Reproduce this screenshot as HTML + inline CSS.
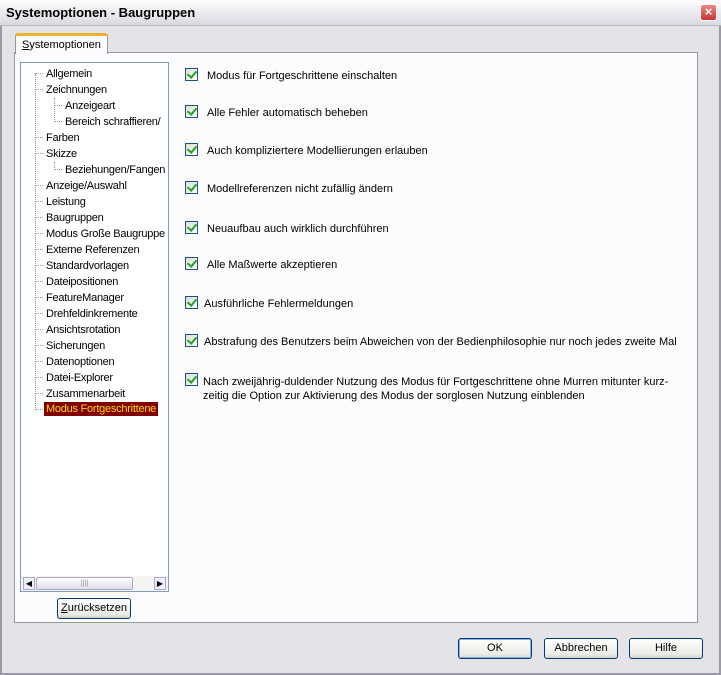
<!DOCTYPE html>
<html><head><meta charset="utf-8"><style>
*{margin:0;padding:0;box-sizing:border-box}
body{width:721px;height:675px;background:#e4e3e7;font-family:"Liberation Sans",sans-serif;font-size:11px;color:#000;position:relative;overflow:hidden}
.a{position:absolute}
.title{left:0;top:0;width:721px;height:26px;background:linear-gradient(#fdfdfd,#e8e8ee 60%,#d8d8e0);border-bottom:1px solid #b8b8c4}
.title span{position:absolute;left:6px;top:5px;font-weight:bold;font-size:13px}
.close{right:4px;top:4px;width:17px;height:17px;background:linear-gradient(#e88,#c33);border:1px solid #fff;border-radius:3px;color:#fff;font-weight:bold;font-size:13px;text-align:center;line-height:14px}
.frame{left:0;top:26px;width:721px;height:649px;border:2px solid #9a9aa6;border-top:none}
.panel{left:14px;top:52px;width:684px;height:571px;background:#fcfcfe;border:1px solid #919b9c}
.tab{left:15px;top:33px;width:93px;height:21px;background:#fcfcfe;border:1px solid #919b9c;border-bottom:none;border-top:3px solid #f0b030;border-radius:3px 3px 0 0}
.tab span{position:absolute;left:6px;top:3px;font-size:11px}
.tree{left:20px;top:62px;width:149px;height:530px;background:#fff;border:1px solid #7f9db9}
.tl{left:20px;top:62px;width:148px;height:420px;overflow:hidden}
.ti{position:absolute;white-space:nowrap;font-size:11px;height:14px;line-height:14px;letter-spacing:-0.25px}
.hl{position:absolute;border-top:1px dotted #999;width:8px}
.vl{position:absolute;border-left:1px dotted #999}
.sb{left:21px;top:576px;width:147px;height:15px;background:#f4f4f2}
.cb{position:absolute;width:13px;height:13px;border:1px solid #1c5180;background:linear-gradient(135deg,#dcdcd6,#fff)}
.cb:after{content:"";position:absolute;left:3px;top:0px;width:4px;height:7px;border:solid #21a121;border-width:0 2px 2px 0;transform:rotate(40deg)}
.lb{position:absolute;white-space:nowrap;font-size:11px}
.btn{position:absolute;height:21px;border:1px solid #003c74;border-radius:3px;background:linear-gradient(#fff,#ecebe6 80%,#d6d0c5);text-align:center;line-height:19px;font-size:11px}
</style></head><body>
<div class="a title"><span>Systemoptionen - Baugruppen</span></div>
<div class="a close">×</div>
<div class="a frame"></div>
<div class="a panel"></div>
<div class="a tab"><span><u>S</u>ystemoptionen</span></div>
<div class="a tree">
<div class="vl" style="left:14px;top:11px;height:336px"></div>
<div class="vl" style="left:33px;top:35px;height:24px"></div>
<div class="vl" style="left:33px;top:99px;height:8px"></div>
</div>
<div class="a tl">
<div class="hl" style="left:15px;top:11px"></div><div class="ti" style="left:26px;top:5px">Allgemein</div>
<div class="hl" style="left:15px;top:27px"></div><div class="ti" style="left:26px;top:21px">Zeichnungen</div>
<div class="hl" style="left:34px;top:43px"></div><div class="ti" style="left:45px;top:37px">Anzeigeart</div>
<div class="hl" style="left:34px;top:59px"></div><div class="ti" style="left:45px;top:53px">Bereich schraffieren/</div>
<div class="hl" style="left:15px;top:75px"></div><div class="ti" style="left:26px;top:69px">Farben</div>
<div class="hl" style="left:15px;top:91px"></div><div class="ti" style="left:26px;top:85px">Skizze</div>
<div class="hl" style="left:34px;top:107px"></div><div class="ti" style="left:45px;top:101px">Beziehungen/Fangen</div>
<div class="hl" style="left:15px;top:123px"></div><div class="ti" style="left:26px;top:117px">Anzeige/Auswahl</div>
<div class="hl" style="left:15px;top:139px"></div><div class="ti" style="left:26px;top:133px">Leistung</div>
<div class="hl" style="left:15px;top:155px"></div><div class="ti" style="left:26px;top:149px">Baugruppen</div>
<div class="hl" style="left:15px;top:171px"></div><div class="ti" style="left:26px;top:165px">Modus Große Baugruppe</div>
<div class="hl" style="left:15px;top:187px"></div><div class="ti" style="left:26px;top:181px">Externe Referenzen</div>
<div class="hl" style="left:15px;top:203px"></div><div class="ti" style="left:26px;top:197px">Standardvorlagen</div>
<div class="hl" style="left:15px;top:219px"></div><div class="ti" style="left:26px;top:213px">Dateipositionen</div>
<div class="hl" style="left:15px;top:235px"></div><div class="ti" style="left:26px;top:229px">FeatureManager</div>
<div class="hl" style="left:15px;top:251px"></div><div class="ti" style="left:26px;top:245px">Drehfeldinkremente</div>
<div class="hl" style="left:15px;top:267px"></div><div class="ti" style="left:26px;top:261px">Ansichtsrotation</div>
<div class="hl" style="left:15px;top:283px"></div><div class="ti" style="left:26px;top:277px">Sicherungen</div>
<div class="hl" style="left:15px;top:299px"></div><div class="ti" style="left:26px;top:293px">Datenoptionen</div>
<div class="hl" style="left:15px;top:315px"></div><div class="ti" style="left:26px;top:309px">Datei-Explorer</div>
<div class="hl" style="left:15px;top:331px"></div><div class="ti" style="left:26px;top:325px">Zusammenarbeit</div>
<div class="hl" style="left:15px;top:347px"></div><div class="ti" style="left:24px;top:340px;background:#800000;color:#ffd700;padding:0 2px">Modus Fortgeschrittene</div>
</div>
<div class="a sb">
<div class="a" style="left:2px;top:1px;width:12px;height:13px;border:1px solid #aab;background:#eef;font-size:8px;line-height:11px;text-align:center">◀</div>
<div class="a" style="left:15px;top:1px;width:97px;height:13px;border:1px solid #aab;border-radius:2px;background:linear-gradient(#fff,#dde);font-size:7px;text-align:center;line-height:11px;color:#889">||||</div>
<div class="a" style="left:133px;top:1px;width:12px;height:13px;border:1px solid #aab;background:#eef;font-size:8px;line-height:11px;text-align:center">▶</div>
</div>
<div class="btn" style="left:57px;top:598px;width:74px"><u>Z</u>urücksetzen</div>

<div class="cb" style="left:185px;top:68px"></div><div class="lb" style="left:207px;top:70px">Modus für Fortgeschrittene einschalten</div>
<div class="cb" style="left:185px;top:105px"></div><div class="lb" style="left:207px;top:107px">Alle Fehler automatisch beheben</div>
<div class="cb" style="left:185px;top:143px"></div><div class="lb" style="left:207px;top:145px">Auch kompliziertere Modellierungen erlauben</div>
<div class="cb" style="left:185px;top:181px"></div><div class="lb" style="left:207px;top:183px">Modellreferenzen nicht zufällig ändern</div>
<div class="cb" style="left:185px;top:221px"></div><div class="lb" style="left:207px;top:223px">Neuaufbau auch wirklich durchführen</div>
<div class="cb" style="left:185px;top:257px"></div><div class="lb" style="left:207px;top:259px">Alle Maßwerte akzeptieren</div>
<div class="cb" style="left:185px;top:296px"></div><div class="lb" style="left:204px;top:298px">Ausführliche Fehlermeldungen</div>
<div class="cb" style="left:185px;top:334px"></div><div class="lb" style="left:204px;top:336px">Abstrafung des Benutzers beim Abweichen von der Bedienphilosophie nur noch jedes zweite Mal</div>
<div class="cb" style="left:185px;top:373px"></div><div class="lb" style="left:203px;top:375px;line-height:14px">Nach zweijährig-duldender Nutzung des Modus für Fortgeschrittene ohne Murren mitunter kurz-<br>zeitig die Option zur Aktivierung des Modus der sorglosen Nutzung einblenden</div>

<div class="btn" style="left:458px;top:638px;width:74px;border-color:#003c74;box-shadow:inset 0 0 0 1px #8db2e3">OK</div>
<div class="btn" style="left:544px;top:638px;width:74px">Abbrechen</div>
<div class="btn" style="left:629px;top:638px;width:74px">Hilfe</div>
</body></html>
